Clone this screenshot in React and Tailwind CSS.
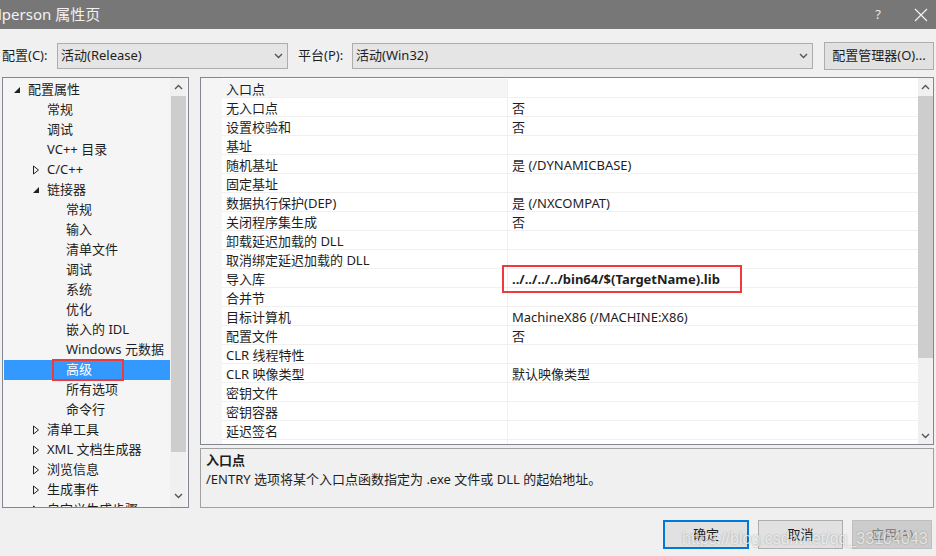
import React from 'react'

const font = { fontFamily: '"Segoe UI", "Noto Sans", "Noto Sans CJK SC", sans-serif' }

// tree: [level, label, expander] expander: 'open' | 'closed' | null
const tree = [
  [0, '配置属性', 'open'],
  [1, '常规'],
  [1, '调试'],
  [1, 'VC++ 目录'],
  [1, 'C/C++', 'closed'],
  [1, '链接器', 'open'],
  [2, '常规'],
  [2, '输入'],
  [2, '清单文件'],
  [2, '调试'],
  [2, '系统'],
  [2, '优化'],
  [2, '嵌入的 IDL'],
  [2, 'Windows 元数据'],
  [2, '高级', null, true],
  [2, '所有选项'],
  [2, '命令行'],
  [1, '清单工具', 'closed'],
  [1, 'XML 文档生成器', 'closed'],
  [1, '浏览信息', 'closed'],
  [1, '生成事件', 'closed'],
  [1, '自定义生成步骤', 'closed'],
]

const props = [
  ['入口点', ''],
  ['无入口点', '否'],
  ['设置校验和', '否'],
  ['基址', ''],
  ['随机基址', '是 (/DYNAMICBASE)'],
  ['固定基址', ''],
  ['数据执行保护(DEP)', '是 (/NXCOMPAT)'],
  ['关闭程序集生成', '否'],
  ['卸载延迟加载的 DLL', ''],
  ['取消绑定延迟加载的 DLL', ''],
  ['导入库', '../../../../bin64/$(TargetName).lib'],
  ['合并节', ''],
  ['目标计算机', 'MachineX86 (/MACHINE:X86)'],
  ['配置文件', '否'],
  ['CLR 线程特性', ''],
  ['CLR 映像类型', '默认映像类型'],
  ['密钥文件', ''],
  ['密钥容器', ''],
  ['延迟签名', ''],
  ['', ''],
]

function Chevron({ up }) {
  return (
    <svg width="9" height="6" viewBox="0 0 9 6" className="shrink-0">
      <path d={up ? 'M1 5 L4.5 1.5 L8 5' : 'M1 1 L4.5 4.5 L8 1'} fill="none" stroke="#555" strokeWidth="1.4" />
    </svg>
  )
}

function Expander({ kind }) {
  if (kind === 'open')
    return (
      <svg width="8" height="8" viewBox="0 0 8 8">
        <path d="M7 1 L7 7 L1 7 Z" fill="#222" />
      </svg>
    )
  if (kind === 'closed')
    return (
      <svg width="8" height="10" viewBox="0 0 8 10">
        <path d="M1.5 1 L6.5 5 L1.5 9 Z" fill="none" stroke="#222" strokeWidth="1" />
      </svg>
    )
  return null
}

export default function App() {
  return (
    <div className="w-[936px] h-[556px] bg-[#f0f0f0] overflow-hidden relative flex flex-col text-[12px] text-[#1e1e1e]" style={font}>
      {/* title bar */}
      <div className="h-[29px] bg-[#777777] flex items-center text-[#f2f2f2] shrink-0">
        <span className="text-[15px] -ml-[2px]">lperson 属性页</span>
        <span className="ml-auto w-[20px] text-center text-[13px] text-[#e8e8e8] mr-[26px]">?</span>
        <svg width="14" height="14" viewBox="0 0 14 14" className="mr-[8px]">
          <path d="M1 1 L13 13 M13 1 L1 13" stroke="#f2f2f2" strokeWidth="1.2" />
        </svg>
      </div>

      {/* config row */}
      <div className="flex items-center h-[28px] mt-[13px] pl-[2px] shrink-0">
        <span className="w-[55px] text-[13px]">配置(C):</span>
        <div className="w-[231px] h-[26px] border border-[#adadad] bg-[#e5e5e5] flex items-center pl-[3px] pr-[4px] text-[13px]">
          <span className="flex-1">活动(Release)</span>
          <Chevron />
        </div>
        <span className="ml-[10px] w-[54px] text-[13px]">平台(P):</span>
        <div className="w-[461px] h-[26px] border border-[#adadad] bg-[#e5e5e5] flex items-center pl-[3px] pr-[4px] text-[13px]">
          <span className="flex-1">活动(Win32)</span>
          <Chevron />
        </div>
        <div className="ml-[11px] w-[110px] h-[28px] border border-[#adadad] bg-[#e1e1e1] flex items-center justify-center text-[13px]">
          配置管理器(O)...
        </div>
      </div>

      {/* main */}
      <div className="flex mt-[7px] pl-[2px] h-[431px] shrink-0">
        {/* tree */}
        <div className="w-[187px] h-full border border-[#828790] bg-[#f5f5f5] flex overflow-hidden">
          <div className="w-[167px] pt-[2px] overflow-hidden">
            {tree.map(([lvl, label, exp, sel], i) => (
              <div key={i} className={`relative h-[20px] flex items-center ${sel ? 'bg-[#3399ff] text-white ml-[1px]' : ''}`}>
                <div className={`${lvl === 0 ? 'w-[25px]' : lvl === 1 ? 'w-[44px]' : 'w-[63px]'} ${sel ? '-ml-[1px]' : ''} flex justify-end pr-[7px] shrink-0`}>
                  <Expander kind={exp} />
                </div>
                <span className="text-[13px] whitespace-nowrap">{label}</span>
                {sel && <div className="absolute left-[48px] top-[-1px] w-[72px] h-[22px] border-2 border-[#ee3a3a]" />}
              </div>
            ))}
          </div>
          <div className="w-[16px] h-full bg-[#f0f0f0] flex flex-col items-center">
            <div className="h-[18px] flex items-center"><Chevron up /></div>
            <div className="w-[15px] h-[356px] bg-[#cdcdcd]" />
            <div className="flex-1" />
            <div className="h-[22px] flex items-center"><Chevron /></div>
          </div>
        </div>

        {/* right */}
        <div className="ml-[11px] w-[734px] flex flex-col">
          <div className="relative h-[368px] border border-[#828790] bg-white flex overflow-hidden">
            <div className="w-[21px] bg-[#f5f5f5] shrink-0" />
            <div className="flex-1 overflow-hidden pt-[1px]">
              {props.map(([name, val], i) => (
                <div key={i} className="flex h-[19px] border-b border-[#f0f0f0]">
                  <div className={`w-[286px] shrink-0 pl-[4px] pt-[3px] flex items-center text-[13px] border-r border-[#f0f0f0] ${i === 0 ? 'bg-[#f5f5f5]' : ''}`}>{name}</div>
                  <div className={`flex-1 pl-[4px] pt-[3px] flex items-center text-[13px] whitespace-nowrap ${i === 10 ? 'font-bold' : ''}`}>{val}</div>
                </div>
              ))}
            </div>
            <div className="w-[15px] shrink-0 bg-[#f0f0f0] flex flex-col items-center">
              <div className="h-[18px] flex items-center"><Chevron up /></div>
              <div className="w-[15px] h-[262px] bg-[#cdcdcd]" />
              <div className="flex-1" />
              <div className="h-[16px] flex items-center"><Chevron /></div>
            </div>
            <div className="absolute left-[301px] top-[187px] w-[240px] h-[28px] border-2 border-[#ee3a3a]" />
          </div>
          <div className="mt-[3px] h-[60px] border border-[#a0a0a0] bg-[#f0f0f0] px-[5px] pt-[2px] text-[13px] leading-[19px]">
            <div className="font-bold">入口点</div>
            <div>/ENTRY 选项将某个入口点函数指定为 .exe 文件或 DLL 的起始地址。</div>
          </div>
        </div>
      </div>

      {/* buttons */}
      <div className="flex justify-end pr-[4px] mt-[12px] text-[13px]">
        <div className="w-[86px] h-[29px] border-2 border-[#0078d7] bg-[#e1e1e1] flex items-center justify-center">确定</div>
        <div className="ml-[9px] w-[85px] h-[29px] border border-[#adadad] bg-[#e1e1e1] flex items-center justify-center">取消</div>
        <div className="ml-[9px] w-[80px] h-[29px] border border-[#bfbfbf] bg-[#cccccc] text-[#838383] flex items-center justify-center">应用(A)</div>
      </div>

      {/* watermark */}
      <div className="absolute left-[682px] top-[527px] text-[16px] text-white/70 whitespace-nowrap [text-shadow:0_0_2px_rgba(0,0,0,0.3)]" style={{ fontFamily: '"Liberation Sans", Arial, sans-serif' }}>
        https://blog.csdn.net/qq_33104043
      </div>
    </div>
  )
}
